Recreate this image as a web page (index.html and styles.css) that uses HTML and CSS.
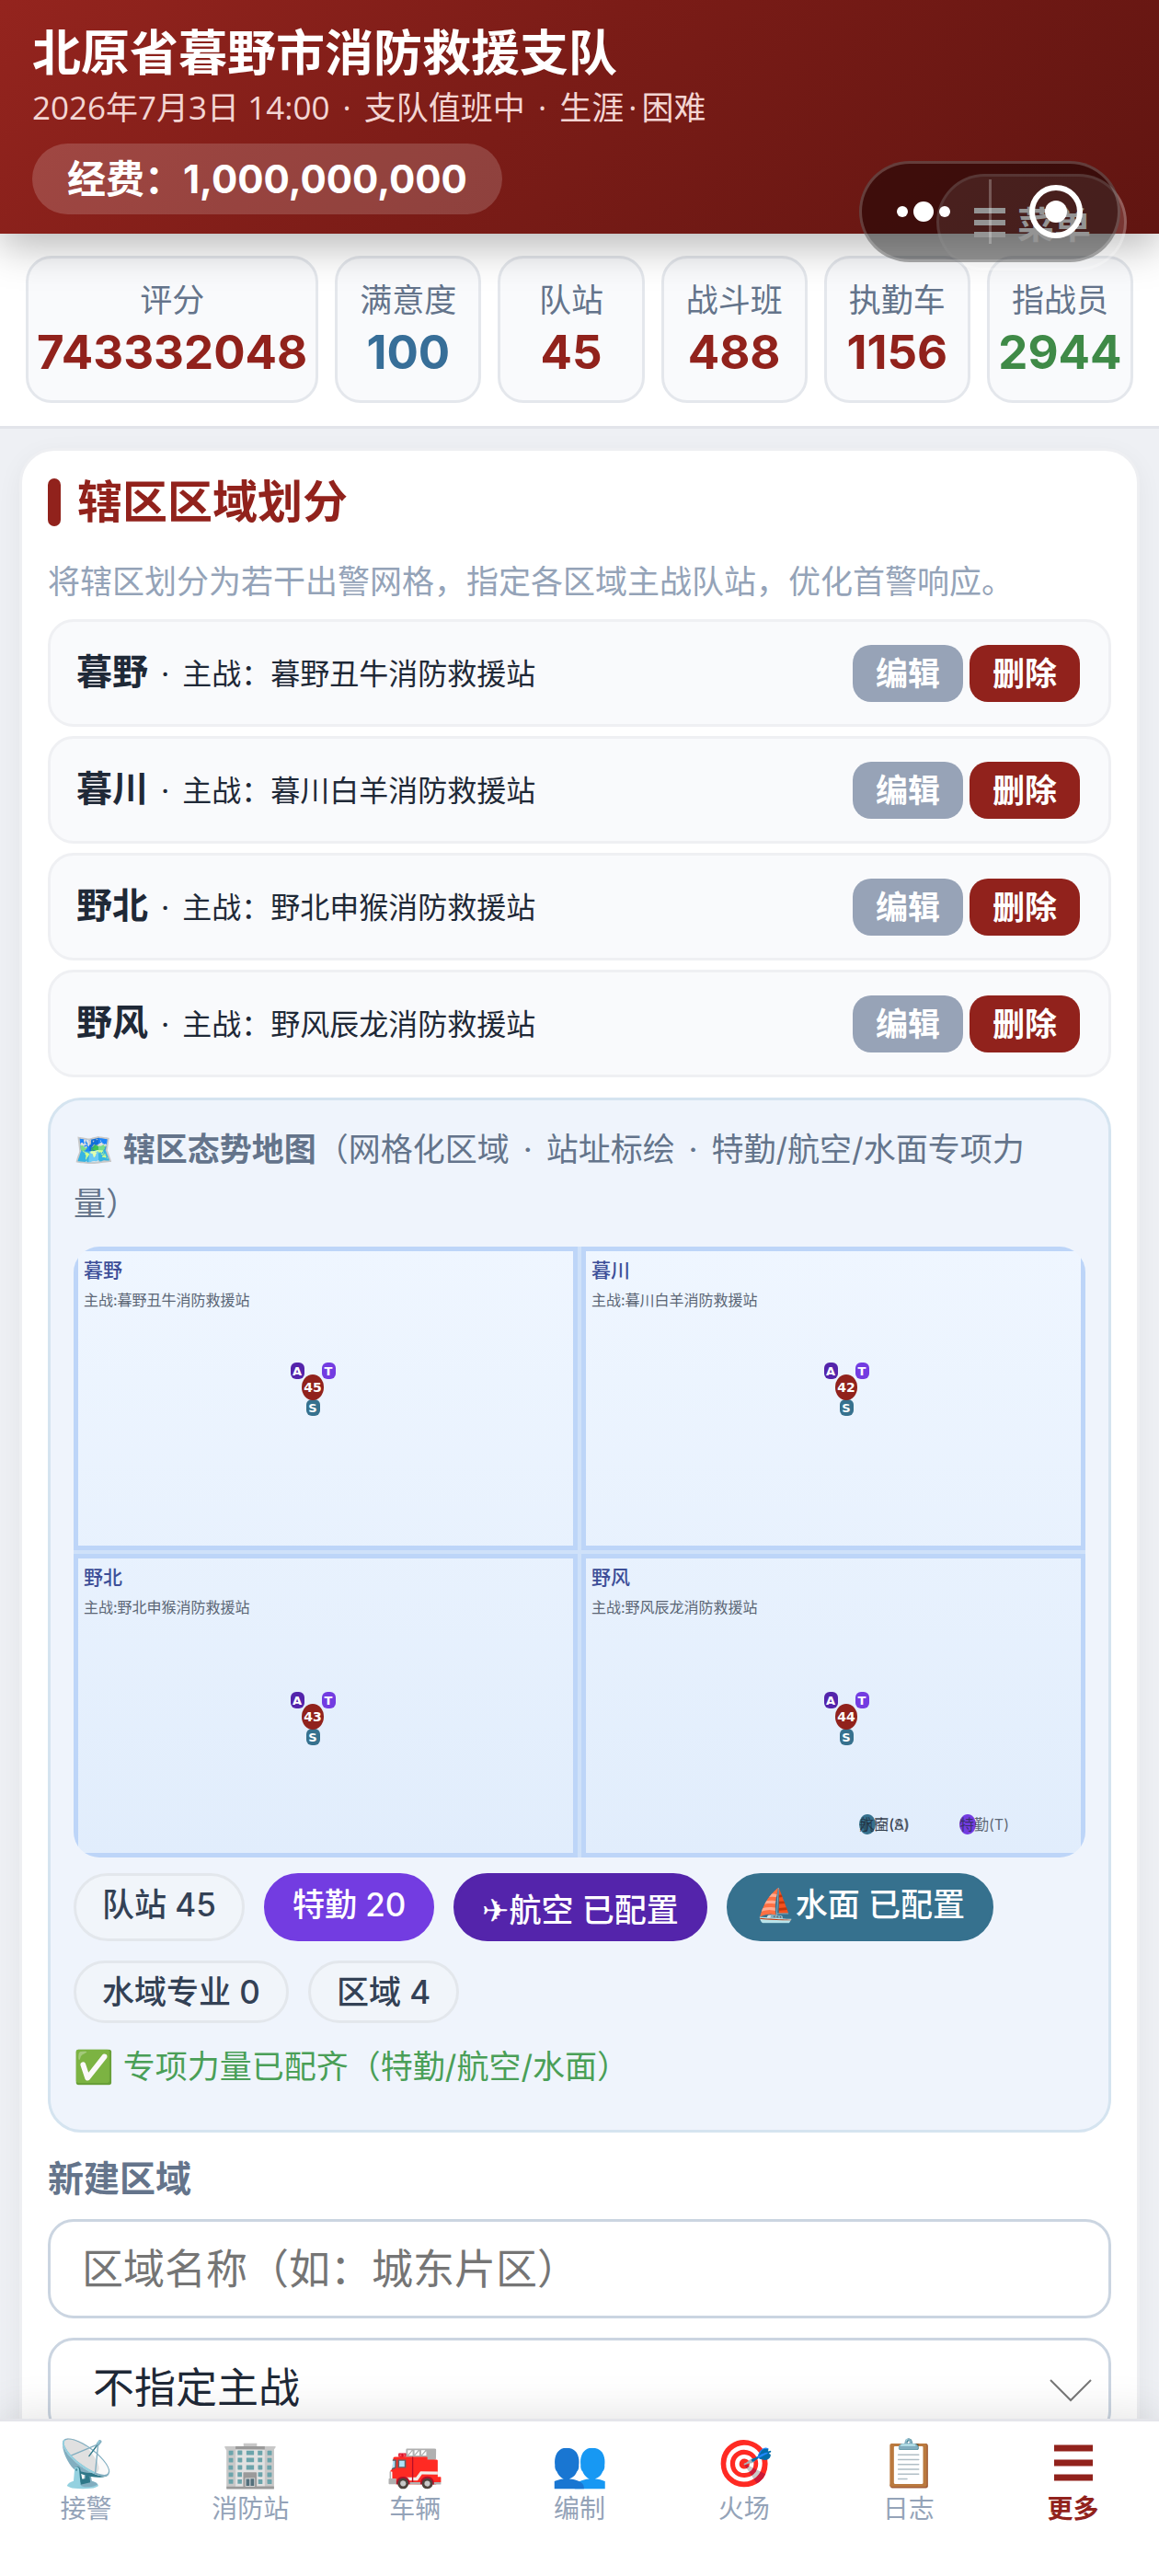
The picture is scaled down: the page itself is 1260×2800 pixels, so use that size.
FILE: index.html
```html
<!DOCTYPE html>
<html lang="zh-CN">
<head>
<meta charset="utf-8">
<meta name="viewport" content="width=device-width, initial-scale=1">
<title>北原省暮野市消防救援支队</title>
<link rel="stylesheet" href="styles.css">
</head>
<body>
<svg width="0" height="0" class="defs" aria-hidden="true">
  <defs>
    <g id="pin">
      <rect x="1" y="1" width="15" height="18" rx="6" fill="#5424ab"/>
      <rect x="35" y="1" width="15" height="18" rx="6" fill="#733ce1"/>
      <rect x="18" y="41" width="15" height="18" rx="6" fill="#36718e"/>
      <ellipse cx="25" cy="28" rx="12" ry="14" fill="#91221c"/>
      <text x="8" y="15" class="pin-letter">A</text>
      <text x="42" y="15" class="pin-letter">T</text>
      <text x="25" y="55" class="pin-letter">S</text>
    </g>
  </defs>
</svg>
<div class="app">
  <header class="header">
    <h1 class="header-title">北原省暮野市消防救援支队</h1>
    <p class="header-sub">2026年7月3日 14:00 <span class="dot">·</span> 支队值班中 <span class="dot">·</span> 生涯<span class="dot">·</span>困难</p>
    <div class="budget">经费：1,000,000,000</div>
    <button class="menu-btn" type="button">
      <svg width="34" height="32" viewBox="0 0 34 32" aria-hidden="true"><path d="M0 3h34M0 16h34M0 29h34" stroke="currentColor" stroke-width="6"/></svg>
      菜单
    </button>
    <div class="capsule">
      <button class="capsule-btn" type="button" aria-label="更多操作">
        <svg width="60" height="24" viewBox="0 0 60 24" fill="#fff"><circle cx="7" cy="12" r="6"/><circle cx="30" cy="12" r="11"/><circle cx="53" cy="12" r="6"/></svg>
      </button>
      <span class="capsule-line"></span>
      <button class="capsule-btn" type="button" aria-label="关闭">
        <svg width="60" height="60" viewBox="0 0 60 60"><circle cx="30" cy="30" r="26" fill="none" stroke="#fff" stroke-width="6"/><circle cx="30" cy="30" r="12" fill="#fff"/></svg>
      </button>
    </div>
  </header>

  <section class="stats" aria-label="概况">
    <div class="stat"><span class="stat-label">评分</span><strong class="stat-value">743332048</strong></div>
    <div class="stat"><span class="stat-label">满意度</span><strong class="stat-value blue">100</strong></div>
    <div class="stat"><span class="stat-label">队站</span><strong class="stat-value">45</strong></div>
    <div class="stat"><span class="stat-label">战斗班</span><strong class="stat-value">488</strong></div>
    <div class="stat"><span class="stat-label">执勤车</span><strong class="stat-value">1156</strong></div>
    <div class="stat"><span class="stat-label">指战员</span><strong class="stat-value green">2944</strong></div>
  </section>

  <main class="main">
    <section class="card">
      <h2 class="card-title">辖区区域划分</h2>
      <p class="card-desc">将辖区划分为若干出警网格，指定各区域主战队站，优化首警响应。</p>

      <ul class="zones">
        <li class="zone"><p class="zone-text"><b>暮野</b> <span class="dot">·</span> 主战：暮野丑牛消防救援站</p><button class="btn btn-gray" type="button">编辑</button><button class="btn btn-red" type="button">删除</button></li>
        <li class="zone"><p class="zone-text"><b>暮川</b> <span class="dot">·</span> 主战：暮川白羊消防救援站</p><button class="btn btn-gray" type="button">编辑</button><button class="btn btn-red" type="button">删除</button></li>
        <li class="zone"><p class="zone-text"><b>野北</b> <span class="dot">·</span> 主战：野北申猴消防救援站</p><button class="btn btn-gray" type="button">编辑</button><button class="btn btn-red" type="button">删除</button></li>
        <li class="zone"><p class="zone-text"><b>野风</b> <span class="dot">·</span> 主战：野风辰龙消防救援站</p><button class="btn btn-gray" type="button">编辑</button><button class="btn btn-red" type="button">删除</button></li>
      </ul>

      <div class="situation">
        <p class="situation-title">🗺️ <b>辖区态势地图</b>（网格化区域 <span class="dot">·</span> 站址标绘 <span class="dot">·</span> 特勤/航空/水面专项力量）</p>
        <div class="map">
          <div class="cell"><h3>暮野</h3><p>主战:暮野丑牛消防救援站</p></div>
          <div class="cell"><h3>暮川</h3><p>主战:暮川白羊消防救援站</p></div>
          <div class="cell"><h3>野北</h3><p>主战:野北申猴消防救援站</p></div>
          <div class="cell"><h3>野风</h3><p>主战:野风辰龙消防救援站</p></div>
          <svg class="pin west north" width="50" height="60"><use href="#pin"/><text x="25" y="33" class="pin-number">45</text></svg>
          <svg class="pin east north" width="50" height="60"><use href="#pin"/><text x="25" y="33" class="pin-number">42</text></svg>
          <svg class="pin west south" width="50" height="60"><use href="#pin"/><text x="25" y="33" class="pin-number">43</text></svg>
          <svg class="pin east south" width="50" height="60"><use href="#pin"/><text x="25" y="33" class="pin-number">44</text></svg>
          <div class="legend">
            <span class="legend-item teal"><span>航空(A)</span><span>水面(S)</span></span>
            <span class="legend-item violet"><span>特勤(T)</span></span>
          </div>
        </div>
        <div class="chips">
          <span class="chip">队站 45</span>
          <span class="chip chip-violet">特勤 20</span>
          <span class="chip chip-purple">✈航空 已配置</span>
          <span class="chip chip-teal">⛵水面 已配置</span>
          <span class="chip">水域专业 0</span>
          <span class="chip">区域 4</span>
        </div>
        <p class="situation-ok">✅ 专项力量已配齐（特勤/航空/水面）</p>
      </div>

      <form class="form">
        <label class="form-label" for="zone-name">新建区域</label>
        <input class="field" id="zone-name" type="text" placeholder="区域名称（如：城东片区）">
        <div class="select-wrap">
          <select class="field" id="zone-station" aria-label="主战队站">
            <option>不指定主战</option>
          </select>
          <svg class="chevron" width="46" height="26" viewBox="0 0 46 26" fill="none"><path d="M1 1l22 22L45 1" stroke="#777" stroke-width="2"/></svg>
        </div>
      </form>
    </section>
  </main>

  <nav class="tabs">
    <a class="tab" href="#alarm"><span class="tab-icon">📡</span>接警</a>
    <a class="tab" href="#stations"><span class="tab-icon">🏢</span>消防站</a>
    <a class="tab" href="#vehicles"><span class="tab-icon">🚒</span>车辆</a>
    <a class="tab" href="#staff"><span class="tab-icon">👥</span>编制</a>
    <a class="tab" href="#fires"><span class="tab-icon">🎯</span>火场</a>
    <a class="tab" href="#log"><span class="tab-icon">📋</span>日志</a>
    <a class="tab active" href="#more"><span class="tab-icon"><svg width="42" height="40" viewBox="0 0 42 40" aria-hidden="true"><path d="M0 4h42M0 20h42M0 36h42" stroke="currentColor" stroke-width="7"/></svg></span>更多</a>
  </nav>
</div>
</body>
</html>
```
FILE: styles.css
```css
* { box-sizing: border-box; margin: 0; padding: 0; }

:root {
  --red: #91221c;
  --slate: #64748b;
  --muted: #94a3b8;
  --line: #e4e7ec;
}

body {
  font-family: Inter, "Noto Sans CJK SC", sans-serif;
  font-size: 35px;
  color: #1f2937;
  background: #eef0f4;
}

button, input, select { font: inherit; color: inherit; border: 0; background: none; }
ul { list-style: none; }
a { text-decoration: none; }
.defs { position: absolute; }
.dot { margin: 0 5px; }

.app { display: flex; flex-direction: column; height: 100vh; }

/* Header */
.header {
  position: relative;
  z-index: 3;
  padding: 20px 35px 21px;
  color: #fff;
  background: linear-gradient(135deg, #94241e, #7b1c17 45%, #611511);
  box-shadow: 0 14px 42px rgba(0, 0, 0, .28);
}
.header-title { font-size: 53px; line-height: 76px; font-weight: 700; }
.header-sub { font-family: "Open Sans", "Noto Sans CJK SC", sans-serif; line-height: 42px; color: #f3d5d3; }
.budget {
  width: fit-content;
  margin-top: 18px;
  padding: 0 38px;
  border-radius: 40px;
  font-size: 42px;
  font-weight: 700;
  line-height: 77px;
  background: rgba(255, 255, 255, .17);
}
.menu-btn {
  position: absolute;
  top: 189px;
  right: 35px;
  display: flex;
  align-items: center;
  gap: 13px;
  height: 105px;
  padding: 0 36px 0 38px;
  border: 3px solid rgba(255, 255, 255, .2);
  border-radius: 53px;
  font-size: 40px;
  font-weight: 700;
  background: rgba(255, 255, 255, .14);
}
.capsule {
  position: absolute;
  top: 175px;
  right: 42px;
  display: flex;
  align-items: center;
  width: 284px;
  height: 110px;
  border: 3px solid rgba(255, 255, 255, .2);
  border-radius: 55px;
  background: rgba(0, 0, 0, .42);
}
.capsule-btn { display: flex; flex: 1; justify-content: center; }
.capsule-btn:first-child { padding-right: 4px; }
.capsule-btn:last-child { padding-left: 4px; }
.capsule-line { width: 3px; height: 70px; background: rgba(255, 255, 255, .25); }

/* Stats */
.stats {
  display: grid;
  grid-template-columns: 2fr repeat(5, 1fr);
  gap: 18px;
  padding: 24px 28px 25px;
  border-bottom: 3px solid #e2e4ea;
  background: #fff;
}
.stat {
  display: flex;
  flex-direction: column;
  align-items: center;
  min-width: 0;
  padding: 17px 0 23px;
  border: 3px solid var(--line);
  border-radius: 28px;
  background: #f9fafc;
}
.stat-label { line-height: 56px; color: var(--slate); }
.stat-value { font-size: 51px; line-height: 58px; color: var(--red); }
.stat-value.blue { color: #376e98; }
.stat-value.green { color: #3f8a47; }

/* Main card */
.main { flex: 1; min-height: 0; overflow: auto; scrollbar-width: none; padding: 21px; }
.card {
  padding: 30px 28px;
  border: 3px solid #eeeff2;
  border-radius: 38px;
  background: #fff;
  box-shadow: 0 7px 28px rgba(0, 0, 0, .05);
}
.card-title {
  display: flex;
  align-items: center;
  gap: 18px;
  font-size: 49px;
  line-height: 52px;
  color: var(--red);
}
.card-title::before { content: ""; width: 14px; height: 52px; border-radius: 7px; background: var(--red); }
.card-desc { margin: 30px 0 11px; line-height: 60px; color: var(--muted); }

.zones { display: grid; gap: 10px; }
.zone {
  display: flex;
  align-items: center;
  gap: 7px;
  height: 117px;
  padding: 0 31px 0 28px;
  border: 3px solid #eff0f3;
  border-radius: 28px;
  background: #f9fafc;
}
.zone-text { flex: 1; font-size: 32px; line-height: 60px; }
.zone-text b { font-size: 39px; }
.btn { height: 62px; padding: 0 25px; border-radius: 20px; line-height: 62px; font-weight: 600; color: #fff; cursor: pointer; }
.btn-gray { background: #97a3b7; }
.btn-red { background: var(--red); }

/* Situation map */
.situation {
  margin-top: 22px;
  padding: 24px 25px 39px;
  border: 3px solid #d5e4f0;
  border-radius: 36px;
  background: #eff4fc;
}
.situation-title { padding-right: 20px; line-height: 59px; color: var(--slate); }
.map {
  position: relative;
  display: grid;
  grid-template: 1fr 1fr / 1fr 1fr;
  gap: 4px;
  height: 664px;
  margin: 17px 0;
  border-radius: 28px;
  overflow: hidden;
  background: linear-gradient(#eff6ff, #e1edfc);
}
.cell { padding: 6px 6px; border: 5px solid #bdd5f8; box-shadow: 0 0 0 2px #cfe1f9; }
.cell h3 { font-size: 21px; line-height: 30px; font-weight: 500; color: #3d4f98; }
.cell p { font-size: 16px; line-height: 34px; color: #5b6675; }
.pin { position: absolute; margin: -28px 0 0 -25px; }
.west { left: 23.6%; }
.east { left: 76.4%; }
.north { top: 23%; }
.south { top: 77%; }
.pin-letter, .pin-number { font-family: "DejaVu Sans", sans-serif; font-weight: 700; text-anchor: middle; fill: #fff; }
.pin-letter { font-size: 13px; }
.pin-number { font-size: 14px; }
.legend { position: absolute; right: 83px; bottom: 24px; display: flex; gap: 54px; }
.legend-item { position: relative; display: grid; font-size: 16px; line-height: 24px; color: rgba(31, 41, 55, .7); }
.legend-item::before { content: ""; position: absolute; left: 0; top: 1px; width: 18px; height: 22px; border-radius: 50%; }
.legend-item span { position: relative; grid-area: 1 / 1; }
.teal::before { background: #36718e; }
.violet::before { background: #733ce1; }

.chips { display: flex; flex-wrap: wrap; gap: 21px; }
.chip {
  padding: 0 28px;
  border: 3px solid #e3e7ec;
  border-radius: 37px;
  line-height: 62px;
  font-weight: 500;
  color: #334155;
  background: #f1f5fa;
}
.chip-violet { color: #fff; border-color: #733ce1; background: #733ce1; }
.chip-purple { padding-top: 6px; color: #fff; border-color: #5424ab; background: #5424ab; }
.chip-teal { color: #fff; border-color: #36718e; background: #36718e; }
.situation-ok { margin-top: 17px; line-height: 60px; color: #4a9f57; }

/* Form */
.form { display: flex; flex-direction: column; margin-top: 20px; }
.form-label { margin-bottom: 14px; font-size: 39px; line-height: 60px; font-weight: 700; color: var(--slate); }
.field {
  width: 100%;
  height: 108px;
  padding: 0 34px;
  border: 3px solid #cbd5e1;
  border-radius: 28px;
  font-size: 45px;
  background: #fff;
  appearance: none;
}
.field::placeholder { color: #757575; }
.select-wrap { position: relative; margin-top: 21px; }
.select-wrap .field { padding: 0 46px; }
.chevron { position: absolute; right: 21px; top: 45px; pointer-events: none; }

/* Tab bar */
.tabs {
  position: relative;
  z-index: 2;
  display: grid;
  grid-template-columns: repeat(7, 1fr);
  height: 171px;
  padding: 14px 4px;
  border-top: 3px solid #e4e5ea;
  background: #fff;
  box-shadow: 0 -7px 42px rgba(0, 0, 0, .1);
}
.tab { display: flex; flex-direction: column; align-items: center; font-size: 28px; line-height: 38px; color: var(--muted); }
.tab-icon { display: flex; align-items: center; height: 62px; font-size: 50px; line-height: 62px; }
.active { color: var(--red); font-weight: 700; }
```
